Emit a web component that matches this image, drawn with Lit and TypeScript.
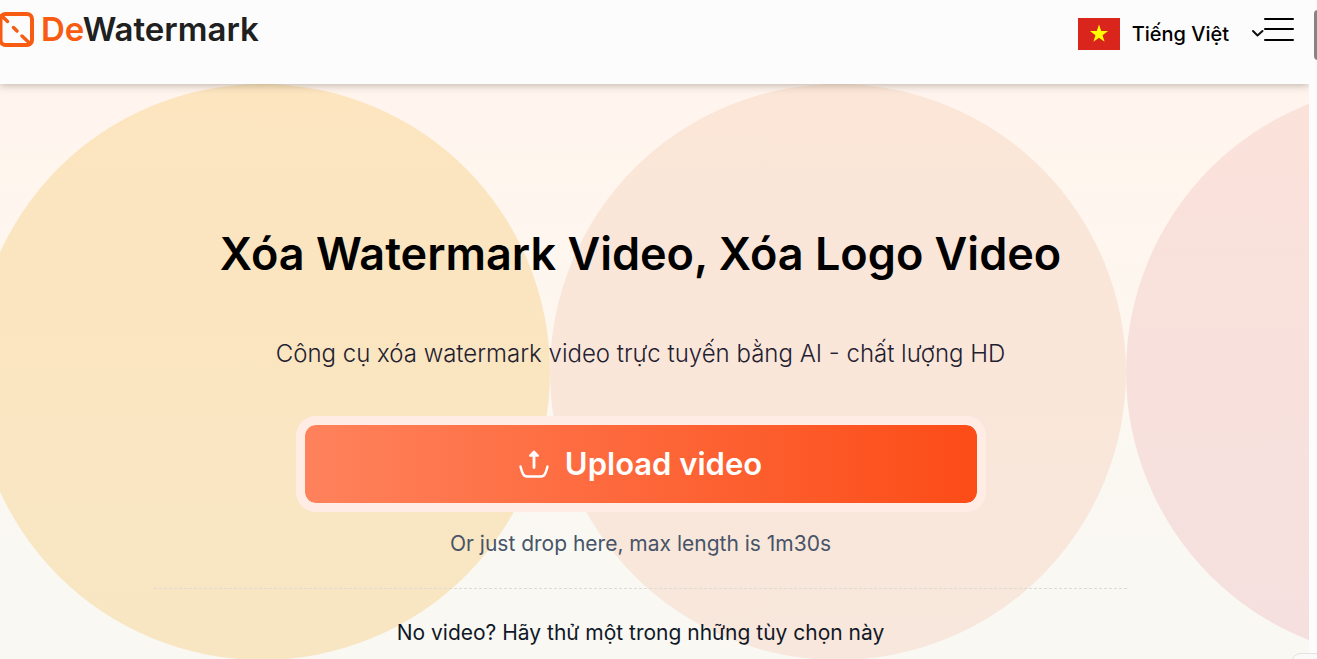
import { LitElement, html, css } from "lit";
import { customElement } from "lit/decorators.js";

@customElement("app-root")
export class AppRoot extends LitElement {
  static styles = css`
    :host {
      display: block;
      font-family: Inter, "Noto Sans", sans-serif;
      color: #000;
    }
    * {
      box-sizing: border-box;
    }
    button {
      font: inherit;
      color: inherit;
      background: none;
      border: 0;
      padding: 0;
      cursor: pointer;
    }
    .shell {
      display: grid;
      grid-template-columns: minmax(0, 1fr) 8px;
      height: 100vh;
      overflow: hidden;
      background: #fcfcfc;
      position: relative;
    }
    .page {
      display: flex;
      flex-direction: column;
      min-height: 0;
    }
    .track {
      padding: 10px 0 0 5px;
      overflow: hidden;
      background: #fcfcfc;
      position: relative;
      z-index: 2;
    }
    .thumb {
      width: 8px;
      height: 50px;
      border-radius: 4px;
      background: #858585;
    }
    .header {
      display: flex;
      justify-content: space-between;
      align-items: flex-start;
      height: 84px;
      flex: none;
      padding-right: 15px;
      background: #fcfcfc;
      box-shadow: 0 1px 8px rgba(60, 50, 30, 0.35);
      position: relative;
      z-index: 1;
    }
    .logo {
      display: flex;
      align-items: center;
      gap: 7px;
      padding-top: 10px;
      height: 48px;
      color: #202020;
      text-decoration: none;
      font-size: 33px;
      line-height: 36px;
      font-weight: 600;
    }
    .accent {
      color: #f75c12;
    }
    .tools {
      display: flex;
      align-items: center;
      padding-top: 16px;
    }
    .lang {
      display: flex;
      align-items: center;
      padding-top: 2px;
      font-size: 20px;
      line-height: 32px;
      font-weight: 500;
    }
    .flag {
      margin-right: 12px;
    }
    .chevron {
      margin-left: 22px;
    }
    svg {
      display: block;
      flex: none;
    }
    .menu {
      margin-bottom: 8px;
    }
    .hero {
      flex: 1;
      min-height: 0;
      position: relative;
      overflow: hidden;
      background: linear-gradient(#fff4ee, #fff6ee 15%, #faf8f3 80%, #f9f8f3);
    }
    .circles {
      position: absolute;
      top: 0;
      left: -2%;
      width: 132%;
      display: flex;
    }
    .circle {
      flex: 1;
      aspect-ratio: 1;
      border-radius: 50%;
    }
    .sun {
      background: linear-gradient(#fce5bf, #f8e6c3);
    }
    .peach {
      background: linear-gradient(#fbe6d7, #f8e7dc);
    }
    .rose {
      background: linear-gradient(#fbe2da, #f5e0df);
    }
    .content {
      position: relative;
      display: flex;
      flex-direction: column;
      align-items: center;
      padding: 140px 28px 0 0;
      text-align: center;
    }
    h1 {
      margin: 0;
      font-size: 45px;
      line-height: 60px;
      font-weight: 600;
    }
    p {
      margin: 0;
    }
    .lead {
      margin-top: 54px;
      font-size: 24px;
      line-height: 32px;
      font-weight: 300;
      color: #1f2030;
    }
    .upload {
      display: flex;
      align-items: center;
      justify-content: center;
      gap: 16px;
      width: 690px;
      max-width: 96%;
      height: 96px;
      margin-top: 46px;
      border: 9px solid #ffece5;
      border-radius: 20px;
      background: linear-gradient(90deg, #ff825c, #fc4c17) padding-box;
      color: #fff;
      font-size: 31px;
      line-height: 40px;
      font-weight: 600;
    }
    .hint {
      margin-top: 16px;
      font-size: 21px;
      line-height: 32px;
      color: #475467;
    }
    .divider {
      width: 76%;
      margin: 28px 0;
      border: 0;
      border-top: 1px dashed #dedbd5;
    }
    .samples {
      font-size: 21px;
      line-height: 32px;
      color: #101828;
    }
    .corner {
      position: absolute;
      z-index: 3;
      right: -14px;
      bottom: -34px;
      width: 40px;
      height: 40px;
      border: 1px solid #e3e3e1;
      border-radius: 10px;
      background: #fafaf8;
    }
  `;

  render() {
    return html`
      <div class="shell">
        <div class="page">
          <header class="header">
            <a class="logo" href="#" aria-label="DeWatermark">
              <svg width="34" height="36" viewBox="0 0 34 36" fill="none" stroke="#f75c12" stroke-width="4">
                <rect x="0.5" y="3" width="31.5" height="31" rx="5" />
                <path
                  d="M2 5L7.500 10.500M13.500 16.500L17 20M22 25L30 32.500"
                  stroke-width="3.400"
                  stroke-linecap="round"
                />
              </svg>
              <span><span class="accent">De</span>Watermark</span>
            </a>
            <div class="tools">
              <button class="lang" aria-haspopup="listbox">
                <svg class="flag" width="42" height="32" viewBox="0 0 42 32">
                  <rect width="42" height="32" fill="#da251d" />
                  <path
                    fill="#ff0"
                    d="M21 6.500l2.200 6.600h6.900l-5.600 4.100 2.100 6.600-5.600-4.100-5.600 4.100 2.100-6.600-5.600-4.100h6.900z"
                  />
                </svg>
                Tiếng Việt
                <svg class="chevron" width="13" height="12" viewBox="0 0 13 12" fill="none" stroke="#111" stroke-width="2">
                  <path d="M2 3l4.500 4.500L11.500 3" stroke-linecap="round" stroke-linejoin="round" />
                </svg>
              </button>
              <button class="menu" aria-label="Menu">
                <svg width="30" height="26" viewBox="0 0 30 26" stroke="#000" stroke-width="2" stroke-linecap="round">
                  <path d="M1 3h28M1 13h28M1 24h28" />
                </svg>
              </button>
            </div>
          </header>
          <main class="hero">
            <div class="circles">
              <div class="circle sun"></div>
              <div class="circle peach"></div>
              <div class="circle rose"></div>
            </div>
            <div class="content">
              <h1>Xóa Watermark Video, Xóa Logo Video</h1>
              <p class="lead">Công cụ xóa watermark video trực tuyến bằng AI - chất lượng HD</p>
              <button class="upload">
                <svg width="30" height="28" viewBox="0 0 30 28" fill="none" stroke="#fff" stroke-width="2.400" stroke-linecap="round">
                  <path d="M1.500 16.500C3 22 4 26.500 8 26.500H22C26 26.500 27 22 28.500 16.500" />
                  <path d="M15 17.500V5" stroke-width="2.800" />
                  <path d="M15 1.500L19 5.800H11z" fill="#fff" stroke-width="2" stroke-linejoin="round" />
                </svg>
                Upload video
              </button>
              <p class="hint">Or just drop here, max length is 1m30s</p>
              <hr class="divider" />
              <p class="samples">No video? Hãy thử một trong những tùy chọn này</p>
            </div>
          </main>
        </div>
        <div class="track"><div class="thumb"></div></div>
        <div class="corner"></div>
      </div>
    `;
  }
}
